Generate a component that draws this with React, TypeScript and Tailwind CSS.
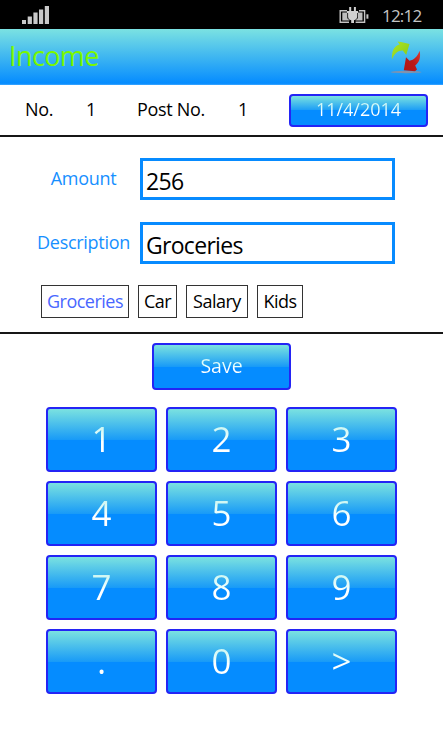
import React from 'react';

const KEYS = ['1', '2', '3', '4', '5', '6', '7', '8', '9', '.', '0', '>'];

const GLOSS =
  'rounded-[4px] border-2 border-[#2424f5] bg-[linear-gradient(180deg,#7be2e0_0%,#199bf7_50%,#058cff_50%,#058cff_100%)]';

function StatusBar() {
  return (
    <div className="flex h-[29px] items-start bg-black pl-[22px] pr-[22px]">
      <svg className="mt-[6px] h-[18px] w-[28px]" viewBox="0 0 28 18" fill="#c9c9c9">
        <rect x="0" y="14" width="4" height="4" />
        <rect x="5.7" y="10.5" width="4.2" height="7.5" />
        <rect x="11.4" y="6.5" width="4.2" height="11.5" />
        <rect x="17" y="3.5" width="4.2" height="14.5" />
        <rect x="22.8" y="0" width="4.2" height="18" />
      </svg>
      <div className="flex-1" />
      <svg className="mr-[13px] mt-[6px] h-[18px] w-[30px]" viewBox="0 0 30 18" fill="none">
        <path d="M8 4.7H1.2v11.6H10M20 4.7h5.6v11.6h-9" stroke="#c4c4c4" strokeWidth="1.4" />
        <path d="M27.4 8.3h2v4.4h-2z" fill="#c4c4c4" />
        <path d="M3.3 6.6h5v5.6l2.4 2.2H3.3zM18.8 6.6h4.7v7.8h-7.2l2.5-2.2z" fill="#bdbdbd" />
        <path d="M10.2 1h2v4h2.7V1h2v4h2.2v2h-1v3.7c0 2-1.4 3.2-3.1 3.5V17h-2.8v-2.8c-1.8-.3-3.1-1.5-3.1-3.5V7H8V5h2.2z" fill="#d0d0d0" />
      </svg>
      <span className="mt-[5px] w-[39px] whitespace-nowrap text-[17px] leading-[22px] tracking-[-0.8px] text-[#c4c4c4]">12:12</span>
    </div>
  );
}

function SwapIcon() {
  return (
    <svg className="mt-[9px] h-[36px] w-[34px]" viewBox="0 0 34 36">
      <defs>
        <linearGradient id="leaf" x1="0" y1="0" x2="1" y2="1">
          <stop offset="0" stopColor="#aee622" />
          <stop offset="1" stopColor="#86c91a" />
        </linearGradient>
        <linearGradient id="ruby" x1="1" y1="0" x2="0" y2="1">
          <stop offset="0" stopColor="#e23c30" />
          <stop offset="0.5" stopColor="#b81919" />
          <stop offset="1" stopColor="#b01414" />
        </linearGradient>
      </defs>
      <ellipse cx="17" cy="34" rx="15.5" ry="1.2" fill="#8293ad" />
      <path d="M3 21.5C2.6 14 4.4 8.2 10.6 6.6L8.5 3.6L12 3.9L20.5 6L17.2 17L13.8 12.6C9 12.4 5.5 15.5 3 21.5Z" fill="url(#leaf)" />
      <path d="M30.6 12.7c1.4 6.5-.2 11.7-4.4 14.8L28 31.5l-2 1.7L14.8 32.2 17 19.2l3.5 3.6C25 21.8 28.6 18.3 30.6 12.7Z" fill="url(#ruby)" />
    </svg>
  );
}

function Key({ label }: { label: string }) {
  return (
    <button className={`flex h-[65px] w-[111px] justify-center ${GLOSS}`}>
      <span className="bg-[linear-gradient(180deg,#9eece5_0%,#f2fffd_52%,#ffffff_53%)] bg-clip-text px-1 text-[35px] font-normal leading-[59px] text-transparent">
        {label}
      </span>
    </button>
  );
}

function Field({ label, value, track, valueTrack }: { label: string; value: string; track: string; valueTrack: string }) {
  return (
    <div className="flex h-[42px]">
      <label className={`w-[103px] whitespace-nowrap text-center text-[18px] leading-[40px] text-[#168fff] ${track}`}>{label}</label>
      <div className={`ml-[5px] w-[255px] border-[3px] border-[#078bff] pl-[3px] text-[23px] leading-[41px] text-black ${valueTrack}`}>{value}</div>
    </div>
  );
}

export default function App() {
  return (
    <div className="h-[738px] w-[443px] overflow-hidden bg-white font-['Open_Sans','Noto_Sans',sans-serif] text-black">
      <StatusBar />
      <header className="flex h-[56px] justify-between bg-[linear-gradient(180deg,#7be2e2_0%,#058cff_97%,#40a8ff_100%)] pl-[9px] pr-[20px]">
        <h1 className="text-[27px] leading-[53px] tracking-[-0.6px] text-[#7cf800]">Income</h1>
        <SwapIcon />
      </header>

      <section className="flex h-[52px] border-b-2 border-[#171717] pl-[25px] text-[18px] leading-[49px]">
        <span className="w-[61px] tracking-[-0.3px]">No.</span>
        <span className="w-[51px]">1</span>
        <span className="w-[101px] whitespace-nowrap tracking-[-0.3px]">Post No.</span>
        <span className="w-[51px]">1</span>
        <button className={`mt-[9px] flex h-[33px] w-[139px] justify-center ${GLOSS}`}>
          <span className="bg-[linear-gradient(180deg,#b5f1eb_0%,#ebffff_53%,#ffffff_54%)] bg-clip-text text-[18px] leading-[27px] text-transparent">11/4/2014</span>
        </button>
      </section>

      <section className="h-[197px] border-b-2 border-[#171717] pl-[32px] pt-[21px]">
        <Field label="Amount" value="256" track="tracking-[-0.3px]" valueTrack="tracking-[-0.6px]" />
        <div className="h-[22px]" />
        <Field label="Description" value="Groceries" track="tracking-[-0.3px]" valueTrack="tracking-[-0.7px]" />
        <div className="ml-[9px] mt-[21px] flex h-[33px] gap-[9px] text-center text-[18px] leading-[30px] tracking-[-0.5px]">
          <span className="w-[88px] border border-[#333] text-[#4967ff]">Groceries</span>
          <span className="w-[39px] border border-[#333]">Car</span>
          <span className="w-[62px] border border-[#333]">Salary</span>
          <span className="w-[46px] border border-[#333]">Kids</span>
        </div>
      </section>

      <main className="flex flex-col items-center pt-[9px]">
        <button className={`flex h-[47px] w-[139px] justify-center ${GLOSS}`}>
          <span className="bg-[linear-gradient(180deg,#b5f1eb_0%,#e9ffff_52%,#ffffff_53%)] bg-clip-text text-[19.5px] leading-[41px] text-transparent">Save</span>
        </button>
        <div className="mt-[17px] grid grid-cols-3 gap-[9px]">
          {KEYS.map((key) => (
            <Key key={key} label={key} />
          ))}
        </div>
      </main>
    </div>
  );
}
